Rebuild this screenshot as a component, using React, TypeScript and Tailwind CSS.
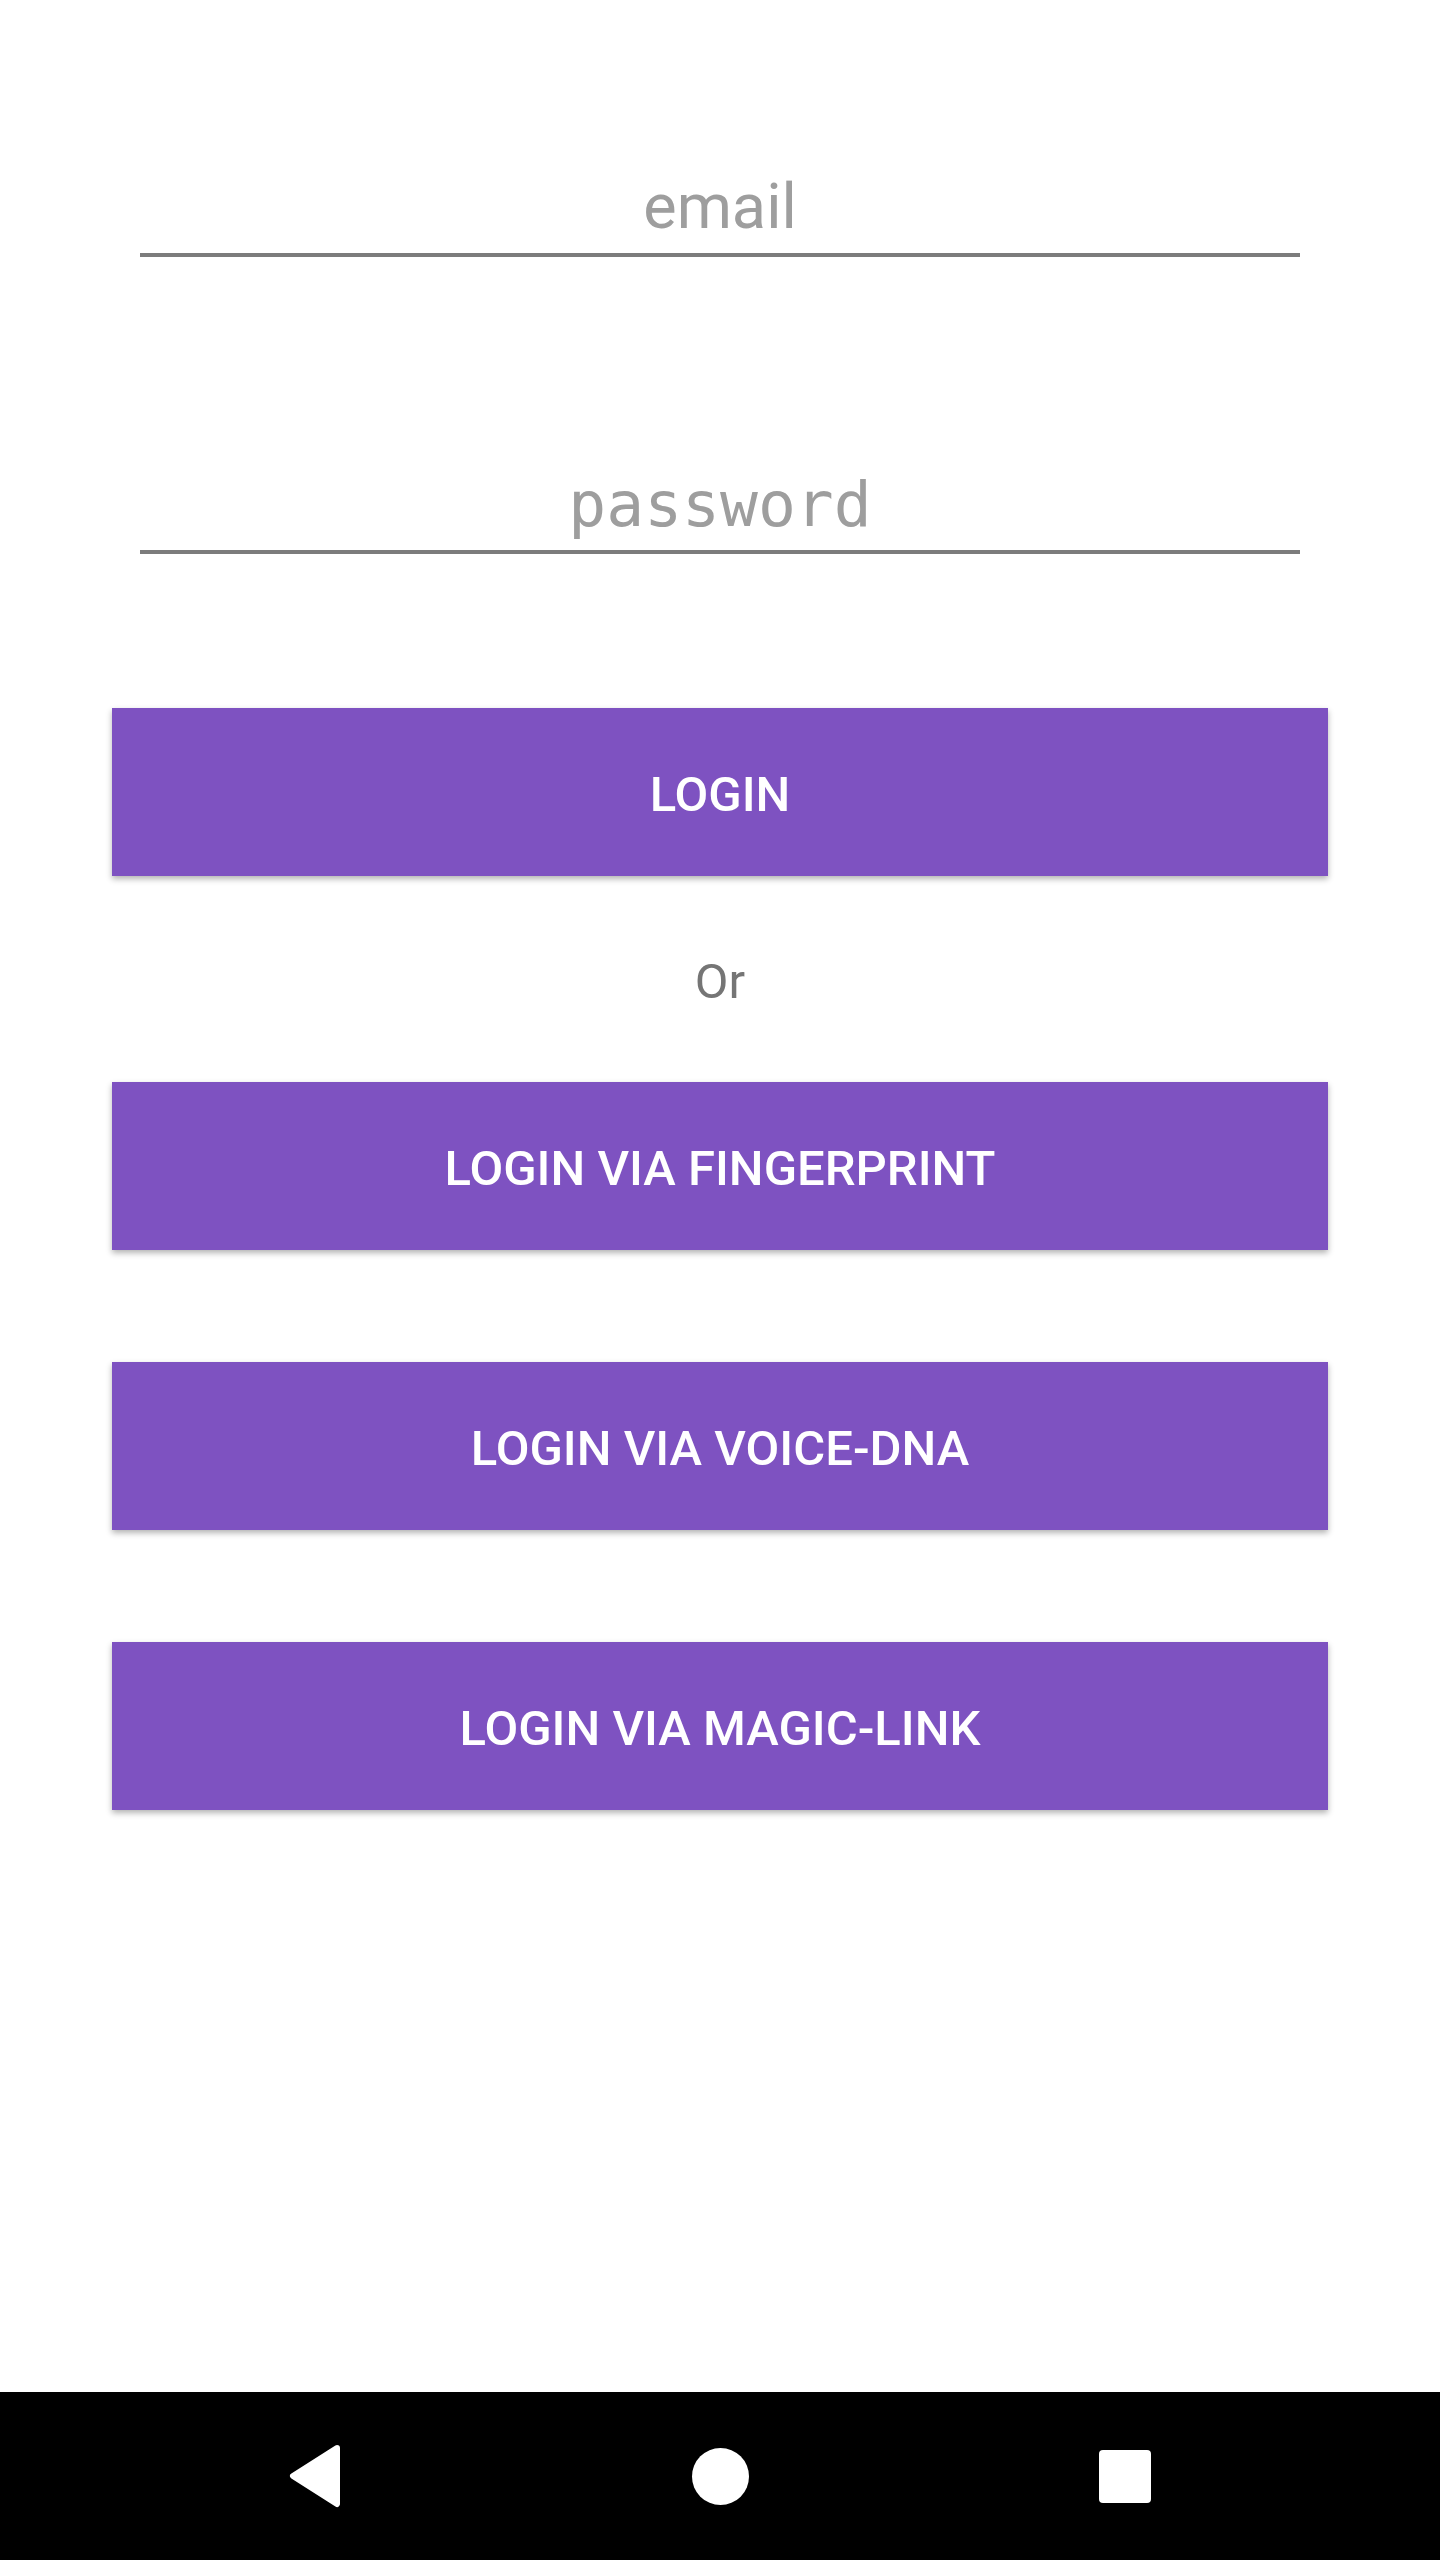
import React from "react";

const roboto = { fontFamily: "Roboto, 'Noto Sans', sans-serif" };

function PurpleButton({ label }: { label: string }) {
  return (
    <button
      className="mx-[112px] h-[168px] pt-[5px] bg-[#7e52c1] text-white text-[49px] font-medium uppercase shadow-[0_3px_6px_rgba(0,0,0,0.3)] font-['Roboto',sans-serif]"
    >
      {label}
    </button>
  );
}

export default function App() {
  return (
    <div className="w-[1440px] h-[2560px] flex flex-col bg-white" style={roboto}>
      <main className="flex-1 flex flex-col">
        {/* email */}
        <div className="mx-[140px] mt-[170px] pb-[9px] border-b-4 border-[#7c7c7c]">
          <div className="h-[74px] leading-[74px] text-center text-[63px] text-[#9e9e9e] font-['Roboto',sans-serif]">
            email
          </div>
        </div>

        {/* password */}
        <div className="mx-[140px] mt-[211px] pb-[8px] border-b-4 border-[#7c7c7c]">
          <div className="h-[74px] leading-[74px] text-center text-[63px] text-[#9e9e9e] font-['DejaVu_Sans_Mono',monospace]">
            password
          </div>
        </div>

        <div className="mt-[154px] flex flex-col">
          <PurpleButton label="Login" />
        </div>

        <div className="mt-[77px] h-[58px] leading-[58px] text-center text-[49px] text-[#757575] font-['Roboto',sans-serif]">
          Or
        </div>

        <div className="mt-[71px] flex flex-col gap-[112px]">
          <PurpleButton label="Login via fingerprint" />
          <PurpleButton label="Login via voice-dna" />
          <PurpleButton label="Login via magic-link" />
        </div>
      </main>

      {/* android nav bar */}
      <nav className="h-[168px] bg-black flex items-center justify-center">
        <div className="w-[405px] flex justify-center">
          <svg width="60" height="66" viewBox="0 0 60 66">
            <path d="M52 5 L8 33 L52 61 Z" fill="white" stroke="white" strokeWidth="6" strokeLinejoin="round" />
          </svg>
        </div>
        <div className="w-[405px] flex justify-center">
          <div className="w-[57px] h-[57px] rounded-full bg-white" />
        </div>
        <div className="w-[405px] flex justify-center">
          <div className="w-[52px] h-[53px] rounded-[4px] bg-white" />
        </div>
      </nav>
    </div>
  );
}
